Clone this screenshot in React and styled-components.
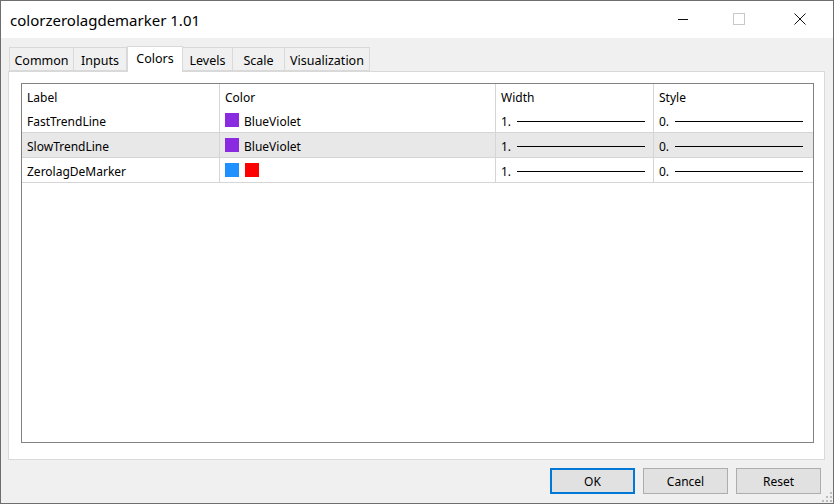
import React from 'react'
import styled, { createGlobalStyle } from 'styled-components'

const GlobalStyle = createGlobalStyle`
  html, body {
    margin: 0;
    padding: 0;
    background: #ffffff;
  }
  body {
    width: 835px;
    height: 504px;
    overflow: hidden;
    font-family: "Noto Sans", "Open Sans", sans-serif;
  }
`

const rows = [
  { label: 'FastTrendLine', colors: ['#8a2be2'], name: 'BlueViolet' },
  { label: 'SlowTrendLine', colors: ['#8a2be2'], name: 'BlueViolet', selected: true },
  { label: 'ZerolagDeMarker', colors: ['#1e90ff', '#ff0000'] },
]

const tabs = [
  { name: 'Common', width: 65 },
  { name: 'Inputs', width: 53 },
  { name: 'Colors', width: 56, active: true },
  { name: 'Levels', width: 50 },
  { name: 'Scale', width: 52 },
  { name: 'Visualization', width: 85 },
]

const App = () => {
  return (
    <>
      <GlobalStyle />
      <Window>
        <TitleBar>
          <Title>colorzerolagdemarker 1.01</Title>
          <Controls>
            <ControlButton>
              <svg width="12" height="12" viewBox="0 0 12 12">
                <line x1="1" y1="6.5" x2="11" y2="6.5" stroke="#111" strokeWidth="1" />
              </svg>
            </ControlButton>
            <ControlButton>
              <svg width="12" height="12" viewBox="0 0 12 12">
                <rect x="0.5" y="0.5" width="11" height="11" fill="none" stroke="#c8c8c8" strokeWidth="1" />
              </svg>
            </ControlButton>
            <ControlButton>
              <svg width="12" height="12" viewBox="0 0 12 12">
                <path d="M0.5 0.5 L11.5 11.5 M11.5 0.5 L0.5 11.5" stroke="#111" strokeWidth="1" />
              </svg>
            </ControlButton>
          </Controls>
        </TitleBar>

        <Body>
          <TabStrip>
            {tabs.map((tab) => (
              <Tab key={tab.name} $width={tab.width} $active={tab.active}>
                {tab.name}
              </Tab>
            ))}
          </TabStrip>

          <Panel>
            <ListBox>
              <HeaderRow>
                <Cell>Label</Cell>
                <Cell $divider>Color</Cell>
                <Cell $divider>Width</Cell>
                <Cell $divider>Style</Cell>
              </HeaderRow>
              {rows.map((row) => (
                <Row key={row.label} $selected={row.selected}>
                  <Cell>{row.label}</Cell>
                  <Cell $divider>
                    <Swatches>
                      {row.colors.map((c, i) => (
                        <Swatch key={i} $color={c} />
                      ))}
                    </Swatches>
                    {row.name && <ColorName>{row.name}</ColorName>}
                  </Cell>
                  <Cell $divider>
                    <LineValue>1.</LineValue>
                    <LineSample />
                  </Cell>
                  <Cell $divider>
                    <LineValue>0.</LineValue>
                    <LineSample />
                  </Cell>
                </Row>
              ))}
            </ListBox>
          </Panel>

          <ButtonRow>
            <Button $default>OK</Button>
            <Button>Cancel</Button>
            <Button>Reset</Button>
          </ButtonRow>
          <Grip>
            <svg width="10" height="10" viewBox="0 0 10 10">
              <g fill="#bcbcbc">
                <rect x="8" y="0" width="2" height="2" />
                <rect x="4" y="4" width="2" height="2" />
                <rect x="8" y="4" width="2" height="2" />
                <rect x="0" y="8" width="2" height="2" />
                <rect x="4" y="8" width="2" height="2" />
                <rect x="8" y="8" width="2" height="2" />
              </g>
            </svg>
          </Grip>
        </Body>
      </Window>
    </>
  )
}

const Window = styled.div`
  width: 834px;
  height: 504px;
  box-sizing: border-box;
  border: 1px solid #6e6e6e;
  display: flex;
  flex-direction: column;
  background: #f0f0f0;
`

const TitleBar = styled.div`
  height: 37px;
  background: #ffffff;
  display: flex;
  align-items: center;
  justify-content: space-between;
  padding-left: 9px;
`

const Title = styled.div`
  font-size: 15px;
  color: #000;
`

const Controls = styled.div`
  display: flex;
  height: 100%;
`

const ControlButton = styled.div`
  width: 56px;
  height: 100%;
  display: flex;
  align-items: center;
  justify-content: center;
  padding-bottom: 2px;
  box-sizing: border-box;
  &:last-child {
    width: 66px;
  }
`

const Body = styled.div`
  flex: 1;
  position: relative;
  display: flex;
  flex-direction: column;
  padding: 8px 8px 0 7px;
`

const TabStrip = styled.div`
  display: flex;
  align-items: flex-end;
  height: 25px;
  padding-left: 1px;
  position: relative;
  z-index: 1;
`

const Tab = styled.div`
  width: ${(p) => p.$width}px;
  height: ${(p) => (p.$active ? 26 : 24)}px;
  margin-bottom: ${(p) => (p.$active ? -1 : 0)}px;
  box-sizing: border-box;
  border: 1px solid #d9d9d9;
  border-bottom: ${(p) => (p.$active ? 'none' : '1px solid #d9d9d9')};
  border-left: ${(p) => (p.$active ? '1px solid #d9d9d9' : 'none')};
  background: ${(p) => (p.$active ? '#ffffff' : '#f0f0f0')};
  font-size: 12.5px;
  color: #000;
  display: flex;
  align-items: center;
  justify-content: center;
  padding-top: ${(p) => (p.$active ? 0 : 2)}px;
  padding-bottom: ${(p) => (p.$active ? 2 : 0)}px;
  &:first-child {
    border-left: 1px solid #d9d9d9;
  }
`

const Panel = styled.div`
  height: 389px;
  box-sizing: border-box;
  background: #ffffff;
  border: 1px solid #d9d9d9;
  padding: 11px 10px 0 12px;
`

const ListBox = styled.div`
  height: 360px;
  box-sizing: border-box;
  border: 1px solid #828282;
  background: #ffffff;
  font-size: 12px;
  color: #000;
`

const HeaderRow = styled.div`
  display: grid;
  grid-template-columns: 197px 276px 158px 159px;
  height: 24px;
`

const Row = styled.div`
  display: grid;
  grid-template-columns: 197px 276px 158px 159px;
  height: 25px;
  box-sizing: border-box;
  border-bottom: 1px solid #d5d5d5;
  background: ${(p) => (p.$selected ? '#e8e8e8' : '#ffffff')};
`

const Cell = styled.div`
  display: flex;
  align-items: center;
  padding: 2px 0 0 5px;
  border-left: ${(p) => (p.$divider ? '1px solid #d5d5d5' : 'none')};
  white-space: nowrap;
  overflow: hidden;
`

const Swatches = styled.div`
  display: flex;
  gap: 6px;
  margin-right: 5px;
  margin-top: -2px;
`

const Swatch = styled.div`
  width: 14px;
  height: 14px;
  background: ${(p) => p.$color};
`

const ColorName = styled.span``

const LineValue = styled.span`
  width: 16px;
`

const LineSample = styled.div`
  width: 128px;
  height: 1px;
  background: #000;
`

const ButtonRow = styled.div`
  display: flex;
  justify-content: flex-end;
  gap: 8px;
  padding: 8px 4px 0 0;
`

const Button = styled.div`
  width: 85px;
  height: 26px;
  box-sizing: border-box;
  background: #e1e1e1;
  border: ${(p) => (p.$default ? '2px solid #0078d7' : '1px solid #adadad')};
  font-size: 12px;
  color: #000;
  display: flex;
  align-items: center;
  justify-content: center;
`

const Grip = styled.div`
  position: absolute;
  right: 1px;
  bottom: 1px;
  line-height: 0;
`

export default App
